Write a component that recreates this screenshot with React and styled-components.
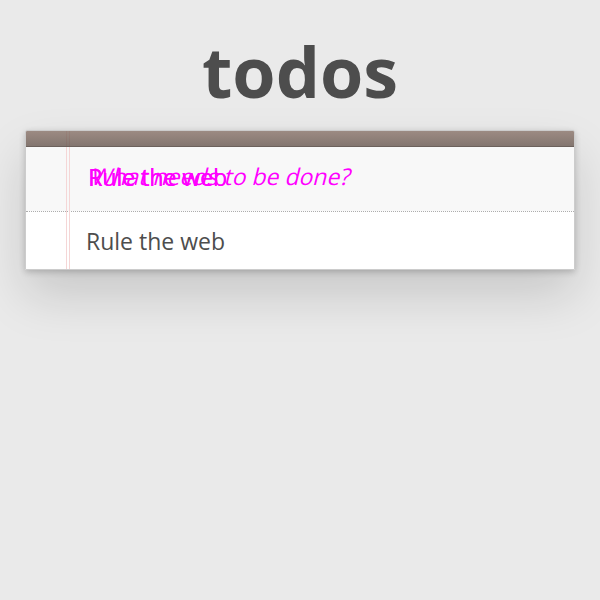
import React from 'react';
import styled, { createGlobalStyle } from 'styled-components';

const GlobalStyle = createGlobalStyle`
  html, body {
    margin: 0;
    padding: 0;
    min-height: 100%;
  }
  html {
    height: 100%;
    background: #eaeaea;
  }
  body {
    height: 100%;
    background: #eaeaea;
    font-family: "Open Sans", "Helvetica Neue", "Liberation Sans", sans-serif;
    color: #4d4d4d;
    -webkit-font-smoothing: antialiased;
  }
  #root {
    min-height: 100%;
  }
`;

const Page = styled.div`
  width: 550px;
  min-height: 600px;
  box-sizing: border-box;
  margin: 0 auto;
  padding-top: 36px;
`;

const Title = styled.h1`
  margin: 0 0 24px;
  font-size: 70px;
  line-height: 70px;
  font-weight: bold;
  text-align: center;
  color: #4d4d4d;
`;

const TodoApp = styled.section`
  position: relative;
  background: rgba(255, 255, 255, 0.9);
  border: 1px solid #ccc;
  border-top-left-radius: 2px;
  border-top-right-radius: 2px;
  box-shadow: 0 2px 6px 0 rgba(0, 0, 0, 0.2), 0 25px 50px 0 rgba(0, 0, 0, 0.15);

  &::before {
    content: '';
    position: absolute;
    top: 0;
    left: 40px;
    width: 2px;
    height: 100%;
    border-left: 1px solid #f5d6d6;
    border-right: 1px solid #f5d6d6;
    z-index: 3;
  }
`;

const Header = styled.header`
  position: relative;
  padding-top: 15px;

  &::before {
    content: '';
    position: absolute;
    top: 0;
    left: 0;
    right: 0;
    height: 15px;
    z-index: 4;
    border-bottom: 1px solid #6c615c;
    background: linear-gradient(to bottom, rgba(132, 110, 100, 0.8), rgba(101, 84, 76, 0.8));
    border-top-left-radius: 1px;
    border-top-right-radius: 1px;
  }
`;

const InputWrap = styled.div`
  position: relative;
`;

const NewTodo = styled.input`
  display: block;
  box-sizing: border-box;
  width: 100%;
  height: 65px;
  margin: 0;
  padding: 16px 16px 16px 60px;
  border: none;
  outline: none;
  background: rgba(0, 0, 0, 0.02);
  font-family: inherit;
  font-size: 23px;
  color: #ff00ff;

  &::placeholder {
    color: transparent;
  }
`;

const Placeholder = styled.span`
  position: absolute;
  left: 62px;
  top: 14px;
  font-size: 23px;
  line-height: 33px;
  color: #ff00ff;
  white-space: pre;
  pointer-events: none;
  transform: skewX(-14deg);
  transform-origin: left bottom;
`;

const TypedValue = styled.span`
  position: absolute;
  left: 62px;
  top: 15px;
  font-size: 23px;
  line-height: 33px;
  color: #ff00ff;
  white-space: pre;
  pointer-events: none;
  text-shadow: 0.4px 0 0 #ff00ff;
`;

const Main = styled.section`
  position: relative;
  z-index: 2;
  border-top: 1px dotted #adadad;
`;

const TodoList = styled.ul`
  margin: 0;
  padding: 0;
  list-style: none;
`;

const TodoItem = styled.li`
  position: relative;
  font-size: 23px;
  background: rgba(255, 255, 255, 0.7);
`;

const Label = styled.label`
  display: block;
  margin-left: 45px;
  padding: 15px 60px 14px 15px;
  line-height: 28px;
  white-space: pre;
  color: #4d4d4d;
`;

export default function App() {
  return (
    <>
      <GlobalStyle />
      <Page>
        <Title>todos</Title>
        <TodoApp>
          <Header>
            <InputWrap>
              <NewTodo placeholder="What needs to be done?" />
              <Placeholder>What needs to be done?</Placeholder>
              <TypedValue>Rule the web</TypedValue>
            </InputWrap>
          </Header>
          <Main>
            <TodoList>
              <TodoItem>
                <Label>Rule the web</Label>
              </TodoItem>
            </TodoList>
          </Main>
        </TodoApp>
      </Page>
    </>
  );
}
